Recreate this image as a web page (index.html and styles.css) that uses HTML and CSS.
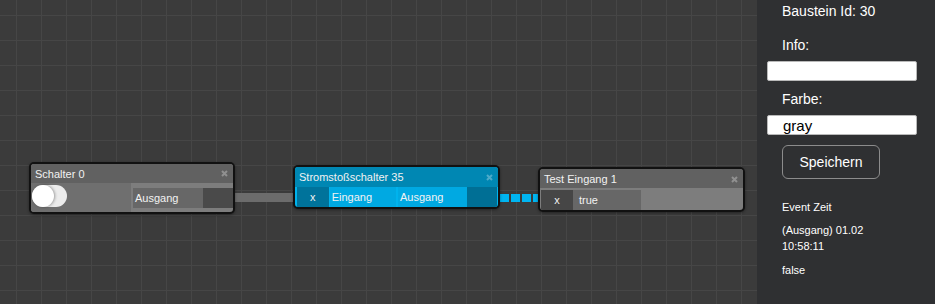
FILE: index.html
```html
<!DOCTYPE html>
<html lang="de">
<head>
    <meta charset="UTF-8">
    <meta name="viewport" content="width=device-width, initial-scale=1.0">
    <title>Logik Editor</title>
    <link rel="stylesheet" href="styles.css">
</head>
<body>

    <div class="editor">
        <!-- Arbeitsfläche -->
        <div class="canvas">
            <svg class="wires" width="757" height="304">
                <line x1="235" y1="197.5" x2="293" y2="197.5" stroke="#6c6c6c" stroke-width="9" />
                <line x1="500" y1="198" x2="538" y2="198" stroke="#00b5f1" stroke-width="8" stroke-dasharray="9 2" />
            </svg>

            <!-- Schalter -->
            <div class="node node-gray node-schalter">
                <div class="node-head">
                    <span>Schalter 0</span>
                    <svg class="node-close" width="7" height="7" viewBox="0 0 7 7"><path d="M1 1L6 6M6 1L1 6" /></svg>
                </div>
                <div class="node-body">
                    <div class="toggle-cell">
                        <div class="toggle"><div class="toggle-knob"></div></div>
                    </div>
                    <div class="ports-out">
                        <div class="port-label">Ausgang</div>
                        <div class="port-dot"></div>
                    </div>
                </div>
            </div>

            <!-- Stromstoßschalter -->
            <div class="node node-blue node-strom">
                <div class="node-head">
                    <span>Stromstoßschalter 35</span>
                    <svg class="node-close" width="7" height="7" viewBox="0 0 7 7"><path d="M1 1L6 6M6 1L1 6" /></svg>
                </div>
                <div class="node-body">
                    <div class="port-dot port-x">x</div>
                    <div class="port-label port-in">Eingang</div>
                    <div class="port-label port-out">Ausgang</div>
                    <div class="port-dot"></div>
                </div>
            </div>

            <!-- Test Eingang -->
            <div class="node node-gray node-test">
                <div class="node-head">
                    <span>Test Eingang 1</span>
                    <svg class="node-close" width="7" height="7" viewBox="0 0 7 7"><path d="M1 1L6 6M6 1L1 6" /></svg>
                </div>
                <div class="node-body">
                    <div class="port-dot port-x">x</div>
                    <div class="port-label port-value">true</div>
                </div>
            </div>
        </div>

        <!-- Eigenschaften -->
        <div class="sidebar">
            <div class="side-id">Baustein Id: 30</div>
            <label class="side-label side-info" for="info">Info:</label>
            <input class="side-input" type="text" id="info" value="">
            <label class="side-label side-farbe" for="farbe">Farbe:</label>
            <input class="side-input" type="text" id="farbe" value="gray">
            <button class="side-btn">Speichern</button>
            <div class="side-small side-event">Event Zeit</div>
            <div class="side-small side-time">(Ausgang) 01.02<br>10:58:11</div>
            <div class="side-small side-value">false</div>
        </div>
    </div>

</body>
</html>
```

FILE: styles.css
```css
/* General Styles */
body {
    margin: 0;
    padding: 0;
    font-family: "Liberation Sans", Arial, sans-serif;
    background-color: #2f3032;
    overflow: hidden;
}

.editor {
    display: flex;
    width: 935px;
    height: 304px;
}

/* Canvas */
.canvas {
    position: relative;
    flex: 0 0 757px;
    height: 304px;
    overflow: hidden;
    background-color: #3b3b3b;
    background-image:
        linear-gradient(to right, #464646 1px, transparent 1px),
        linear-gradient(to bottom, #464646 1px, transparent 1px);
    background-size: 25px 25px;
    background-position: 16px 15px;
}

.wires {
    position: absolute;
    left: 0;
    top: 0;
}

/* Nodes */
.node {
    position: absolute;
    box-sizing: border-box;
    width: 207px;
    border: 2px solid #111;
    border-radius: 5px;
    overflow: hidden;
    color: #f2f2f2;
    font-size: 11px;
    box-shadow: 0 1px 3px rgba(0, 0, 0, 0.4);
}

.node-head {
    display: flex;
    align-items: center;
    justify-content: space-between;
    height: 20px;
    padding: 0 5px 0 4px;
}

.node-close {
    fill: none;
    stroke: rgba(255, 255, 255, 0.3);
    stroke-width: 2;
}

.node-body {
    display: flex;
}

.port-label {
    height: 20px;
    line-height: 20px;
    padding-left: 2px;
    box-sizing: border-box;
}

.port-dot {
    width: 30px;
    height: 20px;
}

.port-x {
    width: 32px;
    line-height: 20px;
    text-align: center;
}

/* Gray nodes */
.node-gray {
    background-color: #7d7d7d;
}

.node-gray .node-head {
    background-color: #616161;
}

.node-gray .port-label {
    background-color: #676767;
}

.node-gray .port-dot {
    background-color: #4a4a4a;
}

.node-schalter {
    left: 29px;
    top: 162px;
    width: 206px;
    height: 52px;
}

.node-schalter .node-head {
    height: 19px;
}

.node-schalter .node-body {
    height: 29px;
}

.toggle-cell {
    width: 100px;
    background-color: #6f6f6f;
    padding: 2px 0 0 1px;
    box-sizing: border-box;
}

.toggle {
    position: relative;
    width: 35px;
    height: 22px;
    border-radius: 11px;
    background-color: #ececec;
}

.toggle-knob {
    width: 22px;
    height: 22px;
    border-radius: 50%;
    background-color: #fff;
    box-shadow: 1px 0 3px rgba(0, 0, 0, 0.35);
}

.ports-out {
    display: flex;
    margin: 5px 0 0 2px;
}

.ports-out .port-label {
    width: 70px;
}

.node-test {
    left: 538px;
    top: 167px;
    height: 45px;
}

.node-test .node-head {
    height: 19px;
    padding-top: 1px;
    box-sizing: border-box;
}

.node-test .node-body {
    padding: 2px 0 0 1px;
    height: 22px;
    box-sizing: border-box;
}

.node-test .port-dot {
    background-color: #464646;
}

.port-value {
    width: 68px;
    padding-left: 6px;
}

/* Blue node */
.node-blue {
    left: 293px;
    top: 165px;
    height: 44px;
    background-color: #00b3ed;
}

.node-blue .node-head {
    background-color: #0087b3;
}

.node-blue .node-body {
    padding: 0 1px;
}

.node-blue .port-label {
    background-color: #00a9e2;
}

.node-blue .port-dot {
    background-color: #006f95;
}

.node-blue .port-x {
    margin-left: 1px;
    background-color: #00739b;
}

.port-in {
    width: 67px;
    margin-left: 1px;
}

.port-out {
    width: 70px;
    margin-left: 2px;
}

/* Sidebar */
.sidebar {
    flex: 1;
    color: #fff;
    padding-left: 10px;
    display: flex;
    flex-direction: column;
    align-items: flex-start;
}

.side-id,
.side-label {
    font-size: 14px;
    line-height: 16px;
    margin-left: 15px;
}

.side-id {
    margin-top: 3px;
}

.side-info {
    margin-top: 18px;
}

.side-farbe {
    margin-top: 10px;
}

.side-input {
    box-sizing: border-box;
    width: 150px;
    height: 20px;
    margin: 8px 0 0 0;
    padding: 0 0 0 15px;
    border: 1px solid #b9b9b9;
    border-radius: 2px;
    background: #fff;
    font-family: "Liberation Sans", Arial, sans-serif;
    font-size: 15px;
    color: #000;
}

.side-btn {
    box-sizing: border-box;
    width: 98px;
    height: 34px;
    margin: 10px 0 0 15px;
    border: 1px solid #8c8c8c;
    border-radius: 6px;
    background: transparent;
    color: #fff;
    font-family: "Liberation Sans", Arial, sans-serif;
    font-size: 14px;
    cursor: pointer;
}

.side-small {
    font-size: 11px;
    line-height: 16px;
    margin-left: 15px;
}

.side-event {
    margin-top: 20px;
}

.side-time {
    margin-top: 7px;
}

.side-value {
    margin-top: 8px;
}
```
